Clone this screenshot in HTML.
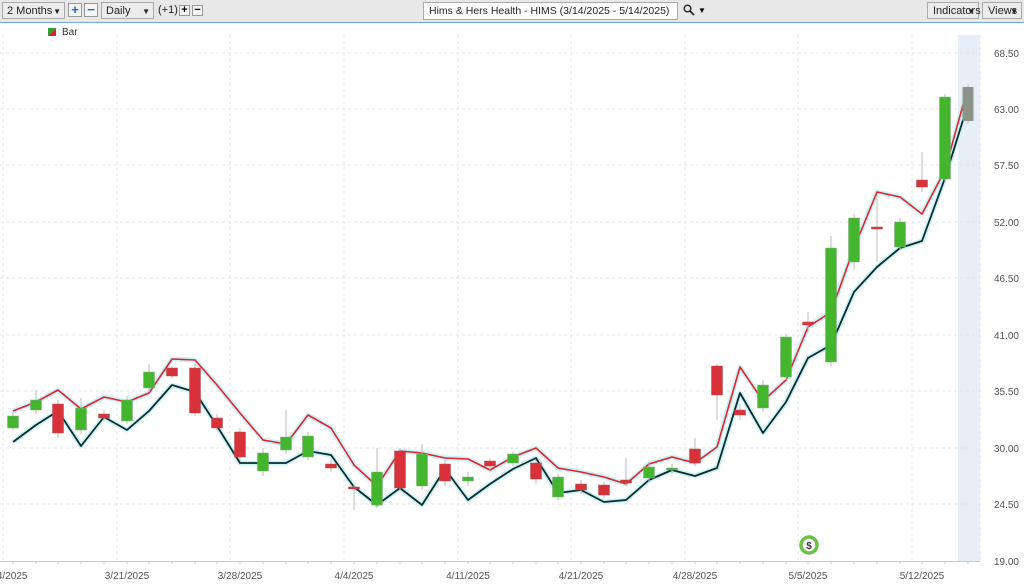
<!DOCTYPE html>
<html><head><meta charset="utf-8"><style>
body{margin:0;width:1024px;height:587px;overflow:hidden;background:#fff;font-family:"Liberation Sans",sans-serif;}
.tb{position:absolute;left:0;top:0;width:1024px;height:22px;background:#e8e8e8;border-bottom:1px solid #6fa8d8;}
.sel{position:absolute;top:2px;height:17px;border:1px solid #aaa;background:#ececec;font-size:11px;line-height:17px;padding-left:4px;box-sizing:border-box;color:#222;white-space:nowrap}
.sel:after{content:"▼";position:absolute;right:3px;top:0;font-size:8px}
.btn{position:absolute;top:3px;width:14px;height:14px;border:1px solid #999;background:#f4f4f4;box-sizing:border-box;text-align:center;font-weight:bold;line-height:12px;font-size:13px}
</style></head><body>
<div class="tb">
<div class="sel" style="left:2px;width:63px">2 Months</div>
<div class="btn" style="left:68px;color:#1a6fc4">+</div>
<div class="btn" style="left:84px;color:#1a6fc4">−</div>
<div class="sel" style="left:101px;width:53px">Daily</div>
<div style="position:absolute;left:158px;top:4px;font-size:11px;color:#222">(+1)</div>
<div class="btn" style="left:179px;width:11px;height:11px;line-height:9px;font-size:11px;top:5px">+</div>
<div class="btn" style="left:192px;width:11px;height:11px;line-height:9px;font-size:11px;top:5px">−</div>
<div style="position:absolute;left:423px;top:2px;width:255px;height:18px;border:1px solid #aaa;background:#fff;box-sizing:border-box;font-size:10.5px;line-height:17px;padding-left:5px;color:#222;white-space:nowrap;overflow:hidden">Hims &amp; Hers Health - HIMS (3/14/2025 - 5/14/2025)</div>
<svg style="position:absolute;left:683px;top:4px" width="12" height="12"><circle cx="4.5" cy="4.5" r="3.3" fill="none" stroke="#222" stroke-width="1.4"/><path d="M7 7l4 4" stroke="#222" stroke-width="1.8"/></svg>
<div style="position:absolute;left:698px;top:6px;font-size:8px">▼</div>
<div class="sel" style="left:927px;width:52px;padding-left:5px">Indicators</div>
<div class="sel" style="left:982px;width:40px;padding-left:5px">Views</div>
</div>
<svg width="1024" height="587" style="position:absolute;left:0;top:0" font-family="Liberation Sans" font-size="10">
<rect x="958" y="35" width="22" height="526" fill="#e6eef8"/>
<g stroke="#e6e6e6" stroke-dasharray="3,3" stroke-width="1">
<path d="M0 53H980M0 109H980M0 165H980M0 222H980M0 278H980M0 335H980M0 391H980M0 448H980M0 504H980"/>
<path d="M3 35V561M117 35V561M230 35V561M344 35V561M458 35V561M571 35V561M685 35V561M798 35V561M912 35V561M980 35V561"/>
</g>
<path d="M0 561.5H980" stroke="#b9cfe4"/>
<g stroke="#c8c8c8"><path d="M13 561v3M36 561v3M58 561v3M81 561v3M104 561v3M127 561v3M149 561v3M172 561v3M195 561v3M217 561v3M240 561v3M263 561v3M286 561v3M308 561v3M331 561v3M354 561v3M377 561v3M400 561v3M422 561v3M445 561v3M468 561v3M490 561v3M513 561v3M536 561v3M558 561v3M581 561v3M604 561v3M626 561v3M649 561v3M672 561v3M695 561v3M717 561v3M740 561v3M763 561v3M786 561v3M808 561v3M831 561v3M854 561v3M877 561v3M900 561v3M922 561v3M945 561v3M968 561v3"/></g>
<g fill="#555" text-anchor="middle">
<text x="8" y="579">/14/2025</text><text x="127" y="579">3/21/2025</text><text x="240" y="579">3/28/2025</text><text x="354" y="579">4/4/2025</text><text x="468" y="579">4/11/2025</text><text x="581" y="579">4/21/2025</text><text x="695" y="579">4/28/2025</text><text x="808" y="579">5/5/2025</text><text x="922" y="579">5/12/2025</text>
</g>
<g fill="#555" text-anchor="end">
<text x="1019" y="57">68.50</text><text x="1019" y="113">63.00</text><text x="1019" y="169">57.50</text><text x="1019" y="226">52.00</text><text x="1019" y="282">46.50</text><text x="1019" y="339">41.00</text><text x="1019" y="395">35.50</text><text x="1019" y="452">30.00</text><text x="1019" y="508">24.50</text><text x="1019" y="565">19.00</text>
</g>
<polygon points="48,28 56,28 48,36" fill="#2ca02c"/><polygon points="56,28 56,36 48,36" fill="#d62728"/>
<text x="62" y="35" fill="#333" font-size="10">Bar</text>
<g fill="none" stroke-linejoin="round">
<polyline stroke="#c8f4f8" stroke-width="5" points="13,411 36,402 58,390 81,409 104,397 127,402 149,393 172,359 195,360 217,385 240,413 263,440 286,444 308,415 331,428 354,465 377,486 400,451 422,453 445,458 468,459 490,470 513,457 536,448 558,468 581,472 604,477 626,484 649,464 672,457 695,463 717,447 740,367 763,401 786,380 808,327 831,312 854,248 877,192 900,197 922,214 945,170 968,87"/>
<polyline stroke="#c8f4f8" stroke-width="5" points="13,442 36,425 58,411 81,446 104,417 127,430 149,411 172,385 195,392 217,426 240,463 263,463 286,463 308,451 331,455 354,487 377,505 400,488 422,505 445,469 468,500 490,484 513,469 536,458 558,493 581,490 604,502 626,500 649,480 672,470 695,476 717,468 740,393 763,433 786,402 808,358 831,345 854,292 877,267 900,248 922,241 945,178 968,104"/>
<polyline stroke="#e8222a" stroke-width="1.6" points="13,411 36,402 58,390 81,409 104,397 127,402 149,393 172,359 195,360 217,385 240,413 263,440 286,444 308,415 331,428 354,465 377,486 400,451 422,453 445,458 468,459 490,470 513,457 536,448 558,468 581,472 604,477 626,484 649,464 672,457 695,463 717,447 740,367 763,401 786,380 808,327 831,312 854,248 877,192 900,197 922,214 945,170 968,87"/>
<polyline stroke="#0e2a2c" stroke-width="1.8" points="13,442 36,425 58,411 81,446 104,417 127,430 149,411 172,385 195,392 217,426 240,463 263,463 286,463 308,451 331,455 354,487 377,505 400,488 422,505 445,469 468,500 490,484 513,469 536,458 558,493 581,490 604,502 626,500 649,480 672,470 695,476 717,468 740,393 763,433 786,402 808,358 831,345 854,292 877,267 900,248 922,241 945,178 968,104"/>
</g>
<g stroke="#bbb" stroke-width="1">
<path d="M13 412v18M36 390v24M58 400v38M81 398v36M104 410v12M127 396v28M149 364v28M172 366v12M195 364v52M217 414v16M240 428v32M263 448v28M286 410v44M308 432v28M331 460v12M354 484v26M377 448v60M400 448v44M422 444v46M445 460v26M468 472v14M490 458v12M513 452v14M536 460v24M558 474v26M581 480v14M604 482v16M626 458v28M649 462v20M672 464v10M695 438v28M717 364v56M740 404v16M763 380v32M786 334v46M808 312v20M831 236v130M854 214v56M877 195v67M900 218v32M922 152v40M945 94v88M968 84v40"/>
</g>
<g fill="#44b62e" stroke="#8a8" stroke-width="0.5">
<rect x="7.5" y="416" width="11" height="12"/><rect x="30.5" y="400" width="11" height="10"/><rect x="75.5" y="408" width="11" height="22"/><rect x="121.5" y="400" width="11" height="21"/><rect x="143.5" y="372" width="11" height="16"/><rect x="257.5" y="453" width="11" height="18"/><rect x="280.5" y="437" width="11" height="13"/><rect x="302.5" y="436" width="11" height="21"/><rect x="371.5" y="472" width="11" height="33"/><rect x="416.5" y="454" width="11" height="32"/><rect x="462.5" y="477" width="11" height="4"/><rect x="507.5" y="454" width="11" height="9"/><rect x="552.5" y="477" width="11" height="20"/><rect x="643.5" y="467" width="11" height="11"/><rect x="666.5" y="468" width="11" height="2"/><rect x="757.5" y="385" width="11" height="23"/><rect x="780.5" y="337" width="11" height="40"/><rect x="825.5" y="248" width="11" height="114"/><rect x="848.5" y="218" width="11" height="44"/><rect x="894.5" y="222" width="11" height="25"/><rect x="939.5" y="97" width="11" height="82"/>
</g>
<rect x="962.5" y="87" width="11" height="34" fill="#8c948a"/>
<g fill="#d9313a" stroke="#a55" stroke-width="0.5">
<rect x="52.5" y="404" width="11" height="29"/><rect x="98.5" y="414" width="11" height="4"/><rect x="166.5" y="368" width="11" height="8"/><rect x="189.5" y="368" width="11" height="45"/><rect x="211.5" y="418" width="11" height="10"/><rect x="234.5" y="432" width="11" height="25"/><rect x="325.5" y="464" width="11" height="4"/><rect x="348.5" y="487" width="11" height="2"/><rect x="394.5" y="451" width="11" height="37"/><rect x="439.5" y="464" width="11" height="17"/><rect x="484.5" y="461" width="11" height="5"/><rect x="530.5" y="463" width="11" height="16"/><rect x="575.5" y="484" width="11" height="6"/><rect x="598.5" y="485" width="11" height="10"/><rect x="620.5" y="480" width="11" height="3"/><rect x="689.5" y="449" width="11" height="14"/><rect x="711.5" y="366" width="11" height="29"/><rect x="734.5" y="410" width="11" height="5"/><rect x="802.5" y="322" width="11" height="3"/><rect x="871.5" y="227" width="11" height="2"/><rect x="916.5" y="180" width="11" height="7"/>
</g>
<circle cx="809" cy="545" r="8" fill="none" stroke="#6cc04a" stroke-width="3.5"/>
<text x="809" y="549" font-size="10" text-anchor="middle" fill="#333" font-weight="bold">$</text>
</svg>
</body></html>
